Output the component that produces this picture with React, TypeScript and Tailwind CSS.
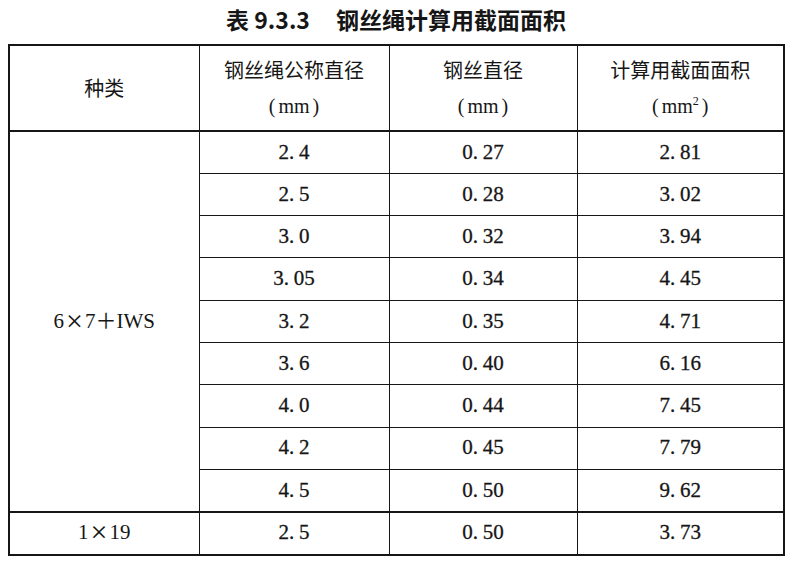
const rows = [
  ['2.4', '0.27', '2.81'],
  ['2.5', '0.28', '3.02'],
  ['3.0', '0.32', '3.94'],
  ['3.05', '0.34', '4.45'],
  ['3.2', '0.35', '4.71'],
  ['3.6', '0.40', '6.16'],
  ['4.0', '0.44', '7.45'],
  ['4.2', '0.45', '7.79'],
  ['4.5', '0.50', '9.62'],
];

const serif = "font-['Liberation_Serif','Noto_Sans_CJK_SC',serif]";
const cell = 'border border-[#161616] text-center';

// 宋体数字：小数点占一整格
function Num({ v }: { v: string }) {
  const [a, b] = v.split('.');
  return (
    <span className="text-[21px] [-webkit-text-stroke:0.3px_#161616]">
      {a}
      <span className="inline-block w-[10px] text-left">.</span>
      {b}
    </span>
  );
}

function Times() {
  return (
    <span className="inline-block w-[21px] text-center text-[30px] leading-none align-[-3px]">×</span>
  );
}

function Mm({ sq }: { sq?: boolean }) {
  return (
    <span className={`${serif} text-[20px]`}>
      <span className="mr-[3px]">(</span>mm
      {sq && <sup className="text-[12px] -top-[8px]">2</sup>}
      <span className="ml-[3px]">)</span>
    </span>
  );
}

export default function App() {
  return (
    <div className="w-[790px] h-[565px] bg-white text-[#161616] overflow-hidden">
      <h1 className="h-[44px] flex items-center justify-center pl-[2px] pb-[6px] text-[23px] font-bold font-['Noto_Sans_CJK_SC',sans-serif]">
        <span>表 9.3.3</span>
        <span className="ml-[26px]">钢丝绳计算用截面面积</span>
      </h1>
      <table className={`ml-[8px] w-[775px] border-collapse border-2 border-[#161616] table-fixed ${serif}`}>
        <colgroup>
          <col className="w-[190px]" />
          <col className="w-[190px]" />
          <col className="w-[188px]" />
          <col className="w-[207px]" />
        </colgroup>
        <thead className="font-['Noto_Sans_CJK_SC',sans-serif]">
          <tr className="h-[86px] border-b-2 border-[#161616] text-[20px]">
            <th className={`${cell} font-normal`}>种类</th>
            <th className={`${cell} font-normal leading-[35px]`}>
              钢丝绳公称直径<br />
              <Mm />
            </th>
            <th className={`${cell} font-normal leading-[35px]`}>
              钢丝直径<br />
              <Mm />
            </th>
            <th className={`${cell} font-normal leading-[35px]`}>
              计算用截面面积<br />
              <Mm sq />
            </th>
          </tr>
        </thead>
        <tbody>
          {rows.map((r, i) => (
            <tr key={i} className="h-[42.3px]">
              {i === 0 && (
                <td rowSpan={9} className={`${cell} text-[21px]`}>
                  6<Times />7＋IWS
                </td>
              )}
              {r.map((v, j) => (
                <td key={j} className={cell}>
                  <Num v={v} />
                </td>
              ))}
            </tr>
          ))}
          <tr className="h-[43px] border-t-2 border-[#161616]">
            <td className={`${cell} text-[21px]`}>
              1<Times />19
            </td>
            <td className={cell}><Num v="2.5" /></td>
            <td className={cell}><Num v="0.50" /></td>
            <td className={cell}><Num v="3.73" /></td>
          </tr>
        </tbody>
      </table>
    </div>
  );
}
